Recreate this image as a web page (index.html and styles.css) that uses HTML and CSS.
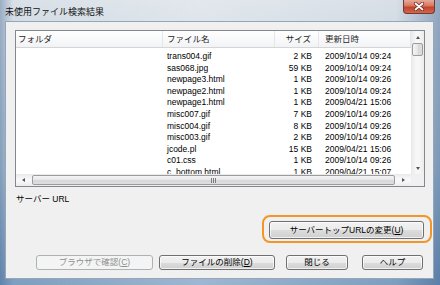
FILE: index.html
```html
<!DOCTYPE html>
<html lang="ja">
<head>
  <meta charset="UTF-8">
  <title>未使用ファイル検索結果</title>
  <link rel="stylesheet" href="styles.css">
</head>
<body>
  <div class="window">
    <!-- タイトルバー -->
    <div class="title-bar">
      <span class="title">未使用ファイル検索結果</span>
      <div class="close-button">
        <svg width="12" height="9" viewBox="0 0 12 9">
          <path d="M2.5 1.5 L9.5 7.5 M9.5 1.5 L2.5 7.5" stroke="#6b2a1e" stroke-width="3.2" stroke-linecap="round"/>
          <path d="M2.5 1.5 L9.5 7.5 M9.5 1.5 L2.5 7.5" stroke="#fff" stroke-width="1.8" stroke-linecap="round"/>
        </svg>
      </div>
    </div>

    <div class="client">
      <!-- ファイル一覧 -->
      <div class="list-box">
        <div class="list">
          <div class="list-header">
            <div class="col folder">フォルダ</div>
            <div class="col">ファイル名</div>
            <div class="col size">サイズ</div>
            <div class="col date">更新日時</div>
          </div>
          <div class="rows">
            <div class="row"><div class="folder"></div><div>trans004.gif</div><div class="size">2 KB</div><div class="date">2009/10/14 09:24</div></div>
            <div class="row"><div class="folder"></div><div>sas068.jpg</div><div class="size">59 KB</div><div class="date">2009/10/14 09:24</div></div>
            <div class="row"><div class="folder"></div><div>newpage3.html</div><div class="size">1 KB</div><div class="date">2009/10/14 09:26</div></div>
            <div class="row"><div class="folder"></div><div>newpage2.html</div><div class="size">1 KB</div><div class="date">2009/10/14 09:24</div></div>
            <div class="row"><div class="folder"></div><div>newpage1.html</div><div class="size">1 KB</div><div class="date">2009/04/21 15:06</div></div>
            <div class="row"><div class="folder"></div><div>misc007.gif</div><div class="size">7 KB</div><div class="date">2009/10/14 09:26</div></div>
            <div class="row"><div class="folder"></div><div>misc004.gif</div><div class="size">8 KB</div><div class="date">2009/10/14 09:26</div></div>
            <div class="row"><div class="folder"></div><div>misc003.gif</div><div class="size">2 KB</div><div class="date">2009/10/14 09:26</div></div>
            <div class="row"><div class="folder"></div><div>jcode.pl</div><div class="size">15 KB</div><div class="date">2009/04/21 15:06</div></div>
            <div class="row"><div class="folder"></div><div>c01.css</div><div class="size">1 KB</div><div class="date">2009/10/14 09:26</div></div>
            <div class="row"><div class="folder"></div><div>c_bottom.html</div><div class="size">1 KB</div><div class="date">2009/04/21 15:07</div></div>
          </div>
        </div>

        <!-- 縦スクロールバー -->
        <div class="v-scroll">
          <div class="arrow"><span class="tri up"></span></div>
          <div class="thumb"></div>
          <div class="track"></div>
          <div class="arrow"><span class="tri down"></span></div>
        </div>

        <!-- 横スクロールバー -->
        <div class="h-scroll">
          <div class="arrow"><span class="tri left"></span></div>
          <div class="thumb"><span class="grip"></span></div>
          <div class="arrow"><span class="tri right"></span></div>
        </div>
        <div class="corner"></div>
      </div>

      <p class="url-label">サーバー URL</p>

      <div class="highlight-row">
        <div class="highlight">
          <button class="btn wide">サーバートップURLの変更(<u>U</u>)</button>
        </div>
      </div>

      <!-- 下部のボタン -->
      <div class="button-row">
        <button class="btn browse" disabled>ブラウザで確認(<u>C</u>)</button>
        <button class="btn delete">ファイルの削除(<u>D</u>)</button>
        <button class="btn close">閉じる</button>
        <button class="btn help">ヘルプ</button>
      </div>
    </div>
  </div>
</body>
</html>
```

FILE: styles.css
```css
/* ページ全体 */
body {
  margin: 0;
  font-family: "Liberation Sans", "Noto Sans CJK JP", sans-serif;
  font-size: 8.5px;
  color: #000;
}

/* ウィンドウ枠（Vista のガラス風） */
.window {
  width: 440px;
  height: 285px;
  display: flex;
  flex-direction: column;
  background:
    linear-gradient(to right, rgba(40, 80, 130, 0.35), rgba(255, 255, 255, 0) 3%, rgba(255, 255, 255, 0.25) 45%, rgba(255, 255, 255, 0) 90%, rgba(40, 80, 130, 0.4)),
    linear-gradient(#d9e0e7, #d2dbe4 10%, #b3c6d8 60%, #7d9dbf);
}

/* タイトルバー */
.title-bar {
  position: relative;
  height: 22px;
  display: flex;
  align-items: center;
  padding-left: 5px;
}

.title {
  font-size: 9px;
  color: #111;
}

/* 閉じるボタン（赤） */
.close-button {
  position: absolute;
  top: 0;
  right: 5px;
  width: 32px;
  height: 14px;
  box-sizing: border-box;
  border: 1px solid #6f3a33;
  border-top: none;
  border-radius: 0 0 4px 4px;
  background: linear-gradient(#e7a99a, #d9765f 45%, #c2432a 55%, #d5664a);
  display: flex;
  justify-content: center;
  align-items: center;
}

/* クライアント領域 */
.client {
  flex: 1;
  margin: 0 7px 7px 6px;
  padding: 8px 8px 0 9px;
  background: #f0f0f0;
  box-shadow: 0 0 0 1px #93a6ba;
  display: flex;
  flex-direction: column;
}

/* リストビュー */
.list-box {
  height: 157px;
  box-sizing: border-box;
  border: 1px solid #828790;
  background: #fff;
  display: grid;
  grid-template-columns: 1fr 13px;
  grid-template-rows: 1fr 12px;
}

.list {
  overflow: hidden;
}

/* 列見出し */
.list-header {
  display: grid;
  grid-template-columns: 147px 112px 44px 92px;
  height: 16px;
  background: linear-gradient(#fff, #f2f3f5);
  border-bottom: 1px solid #d5d5d5;
}

.list-header .col {
  line-height: 16px;
  border-right: 1px solid #e3e6ea;
  color: #1e1e1e;
}

.rows {
  padding-top: 3px;
}

/* 行 */
.row {
  display: grid;
  grid-template-columns: 147px 112px 44px 92px;
  height: 11.6px;
  line-height: 11.6px;
}

.row > div,
.list-header .col {
  padding-left: 4px;
  white-space: nowrap;
  overflow: hidden;
}

.row > .folder,
.list-header .folder {
  padding-left: 2px;
}

.row > .size,
.list-header .size {
  text-align: right;
  padding-left: 0;
  padding-right: 7px;
}

.row > .date,
.list-header .date {
  padding-left: 6px;
}

/* スクロールバー共通 */
.v-scroll,
.h-scroll {
  display: flex;
  background: linear-gradient(to right, #e9e9e9, #f7f7f7 40%, #f7f7f7 60%, #ececec);
}

.v-scroll {
  flex-direction: column;
}

.h-scroll {
  background: linear-gradient(#e9e9e9, #f7f7f7 40%, #f7f7f7 60%, #ececec);
}

.v-scroll .arrow {
  height: 12px;
}

.h-scroll .arrow {
  width: 15px;
}

.arrow {
  display: flex;
  justify-content: center;
  align-items: center;
}

.track {
  flex: 1;
}

/* つまみ */
.thumb {
  box-sizing: border-box;
  border: 1px solid #9c9c9c;
  border-radius: 2px;
  background: linear-gradient(to right, #f5f5f5, #e6e6e6 50%, #d8d8d8 51%, #dedede);
}

.v-scroll .thumb {
  height: 13px;
  margin: 0 1px;
}

.h-scroll .thumb {
  flex: 1;
  margin: 1px 1px;
  background: linear-gradient(#f5f5f5, #e6e6e6 50%, #d8d8d8 51%, #dedede);
  display: flex;
  justify-content: center;
  align-items: center;
}

/* つまみの滑り止め */
.grip {
  width: 5px;
  height: 5px;
  background: repeating-linear-gradient(to right, #7c7c7c 0 1px, transparent 1px 2px);
}

/* 矢印 */
.tri {
  width: 0;
  height: 0;
  border: 2.5px solid transparent;
}

.tri.up {
  border-bottom: 3px solid #555;
  border-top-width: 0;
}

.tri.down {
  border-top: 3px solid #555;
  border-bottom-width: 0;
}

.tri.left {
  border-right: 3px solid #555;
  border-left-width: 0;
}

.tri.right {
  border-left: 3px solid #555;
  border-right-width: 0;
}

.corner {
  background: #f0f0f0;
}

/* ラベル */
.url-label {
  margin: 6px 0 0;
  height: 13px;
  line-height: 13px;
  padding-left: 1px;
}

/* オレンジ色の強調枠 */
.highlight-row {
  display: flex;
  justify-content: flex-end;
  margin: 9px -7px 0 0;
}

.highlight {
  border: 2px solid #f39528;
  border-radius: 8px;
  padding: 4px 6px 2px 5px;
}

/* ボタン */
.btn {
  font-family: inherit;
  font-size: 8.5px;
  color: #000;
  padding: 0;
  height: 15px;
  line-height: 13px;
  box-sizing: border-box;
  border: 1px solid #707070;
  border-radius: 3px;
  background: linear-gradient(#f2f2f2, #ebebeb 50%, #dddddd 51%, #cfcfcf);
  box-shadow: inset 0 0 0 1px rgba(255, 255, 255, 0.7);
}

.btn.wide {
  width: 155px;
  height: 18px;
  line-height: 16px;
  display: block;
}

.btn:disabled {
  color: #8f8f8f;
  border-color: #adb2b5;
  background: #f4f4f4;
  box-shadow: none;
}

.button-row {
  display: flex;
  margin-top: 12px;
  padding-left: 21px;
}

.btn.browse {
  width: 117px;
}

.btn.delete {
  width: 116px;
  margin-left: 6px;
}

.btn.close {
  width: 62px;
  margin-left: 11px;
}

.btn.help {
  width: 61px;
  margin-left: 14px;
}
```
